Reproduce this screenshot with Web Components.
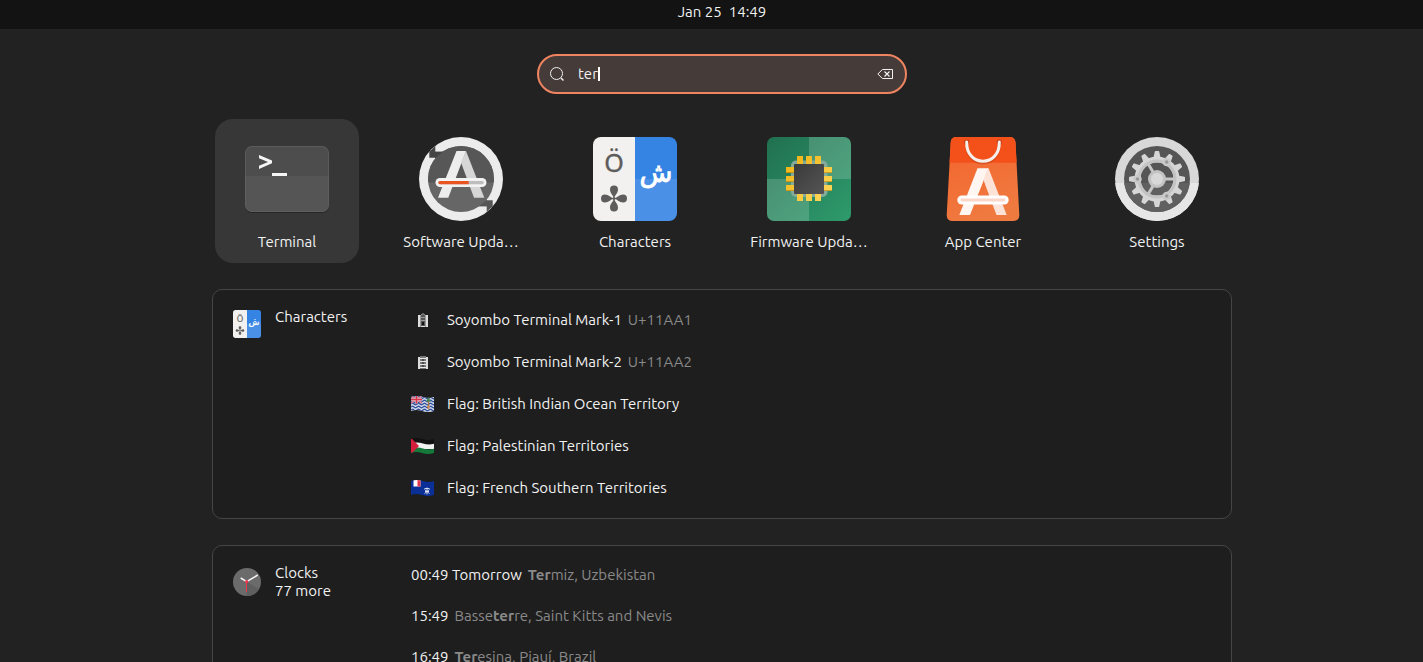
<!DOCTYPE html>
<html lang="en">
<head>
<meta charset="utf-8">
<title>Activities search</title>
<style>
html, body { height: 100%; }
body { margin: 0; overflow: hidden; background: #222; color: #f2f2f2; font: 15px/20px "Ubuntu", "Noto Sans", "Open Sans", sans-serif; }
</style>
</head>
<body>
<activities-overview>
  <top-clock slot="bar" date="Jan 25" time="14:49"></top-clock>
  <search-entry slot="search" value="ter"></search-entry>
  <app-tile slot="apps" icon="terminal" selected>Terminal</app-tile>
  <app-tile slot="apps" icon="updater">Software Upda…</app-tile>
  <app-tile slot="apps" icon="characters">Characters</app-tile>
  <app-tile slot="apps" icon="firmware">Firmware Upda…</app-tile>
  <app-tile slot="apps" icon="center">App Center</app-tile>
  <app-tile slot="apps" icon="settings">Settings</app-tile>
  <result-panel icon="characters" name="Characters">
    <result-row icon="mark1">Soyombo Terminal Mark-1<span slot="detail">U+11AA1</span></result-row>
    <result-row icon="mark2">Soyombo Terminal Mark-2<span slot="detail">U+11AA2</span></result-row>
    <result-row icon="io">Flag: British Indian Ocean Territory</result-row>
    <result-row icon="ps">Flag: Palestinian Territories</result-row>
    <result-row icon="tf">Flag: French Southern Territories</result-row>
  </result-panel>
  <result-panel icon="clocks" name="Clocks" more="77 more">
    <result-row>00:49 Tomorrow<span slot="detail"><b>Ter</b>miz, Uzbekistan</span></result-row>
    <result-row>15:49<span slot="detail">Basse<b>ter</b>re, Saint Kitts and Nevis</span></result-row>
    <result-row>16:49<span slot="detail"><b>Ter</b>esina, Piauí, Brazil</span></result-row>
  </result-panel>
</activities-overview>

<script>
const teeth = Array.from({ length: 12 }, (_, i) =>
  `<path d="M38.400 21L39.800 14.600Q40 14 40.600 14H43.400Q44 14 44.200 14.600L45.600 21Z" transform="rotate(${i * 30} 42 42)"/>`).join('');
const spokes = [0, 120, 240].map(a =>
  `<path d="M50 42H60" transform="rotate(${a} 42 42)"/>`).join('');
const petals = [0, 90, 180, 270].map(a =>
  `<path d="M21 61.500C20 58 17 56 17 52.500a4 4 0 0 1 8 0C25 56 22 58 21 61.500z" transform="rotate(${a} 21 61.500)"/>`).join('');
const flagClip = '<defs><clipPath id="c"><path d="M0 5Q6 3 12 5T23 5V19Q17 21 11 19T0 19z"/></clipPath></defs>';

const ICONS = {
  terminal: ['0 0 84 84', `
    <defs><clipPath id="c"><rect y="9" width="84" height="66" rx="7"/></clipPath></defs>
    <rect y="10" width="84" height="66" rx="7" fill="#262626"/>
    <g clip-path="url(#c)"><path fill="#4d4d4d" d="M0 9h84v30H0z"/><path fill="#555" d="M0 39h84v36H0z"/></g>
    <rect x=".5" y="9.500" width="83" height="65" rx="6.500" fill="none" stroke="#666" stroke-opacity=".6"/>
    <path fill="#f5f5f5" d="M14 18 27 23.500v2.800L14 32v-3.300l9-3.800-9-3.600zM27 36h15v3H27z"/>`],
  updater: ['0 0 84 84', `
    <defs><clipPath id="t"><path d="M0 0h84v45.500H0z"/></clipPath></defs>
    <circle cx="42" cy="42" r="42" fill="#ececec"/>
    <circle cx="42" cy="42" r="33" fill="#666"/>
    <circle cx="42" cy="42" r="33" fill="#575757" clip-path="url(#t)"/>
    <path fill="#575757" d="M16 14.700h8.500L16 22z"/><path fill="#454545" d="M10.300 14.500 16.300 9.200v5.600h7.500l-7.200 6H10.300z"/>
    <g transform="rotate(180 42 42)"><path fill="#666" d="M16 14.700h8.500L16 22z"/><path fill="#555" d="M10.300 14.500 16.300 9.200v5.600h7.500l-7.200 6H10.300z"/></g>
    <path fill="#ededed" d="M37.500 14H47L29.300 60.700H19z"/>
    <path fill="#d6d6d6" d="M42 25.500 47 14l18.300 46.700H55z"/>
    <rect x="16.500" y="41" width="51" height="9" rx="4.500" fill="#f2f2f2"/>
    <rect x="19.300" y="44" width="45.400" height="3.200" rx="1.600" fill="#bdbdbd"/>
    <path fill="#e95420" d="M20.900 44h28.800v3.200H20.900a1.600 1.600 0 0 1 0-3.200z"/>`],
  characters: ['0 0 84 84', `
    <defs><clipPath id="c"><rect width="84" height="84" rx="8"/></clipPath></defs>
    <g clip-path="url(#c)"><path fill="#f2f1ef" d="M0 0h42v84H0z"/><path fill="#3584e4" d="M42 0h42v42H42z"/><path fill="#4a90e6" d="M42 42h42v42H42z"/></g>
    <text x="21" y="35" text-anchor="middle" font-family="Noto Sans, sans-serif" font-size="25" fill="#5e5c5c" stroke="#5e5c5c" stroke-width=".4">Ö</text>
    <g fill="#5e5c5c">${petals}<circle cx="21" cy="61.500" r="1.500"/></g>
    <text x="63" y="45" text-anchor="middle" font-family="DejaVu Sans, sans-serif" font-size="27" fill="#fff" stroke="#fff" stroke-width=".8">ش</text>`],
  firmware: ['0 0 84 84', `
    <defs><clipPath id="c"><rect width="84" height="84" rx="7"/></clipPath>
    <linearGradient id="g" x1="0" y1="0" x2="1" y2="1"><stop stop-color="#217050"/><stop offset="1" stop-color="#2e9b6c"/></linearGradient>
    <linearGradient id="d" x1="0" y1="0" x2="1" y2="1"><stop stop-color="#3a3a3a"/><stop offset="1" stop-color="#555"/></linearGradient>
    <linearGradient id="y" gradientUnits="userSpaceOnUse" x1="20" y1="20" x2="64" y2="64"><stop stop-color="#eeb211"/><stop offset="1" stop-color="#ffda60"/></linearGradient></defs>
    <rect width="84" height="84" rx="7" fill="url(#g)"/>
    <path clip-path="url(#c)" fill="#fff" fill-opacity=".17" d="M42 0h42v42H42zM0 42h42v42H0z"/>
    <rect x="24" y="23.500" width="36.500" height="36.500" rx="5" fill="#84aa9a"/>
    <path fill="url(#y)" d="M30 19h6v8h-6zM39 19h6v8h-6zM48 19h6v8h-6zM30 57h6v7h-6zM39 57h6v7h-6zM48 57h6v7h-6zM19 30h8v6h-8zM19 39h8v6h-8zM19 48h8v6h-8zM57 30h8v6h-8zM57 39h8v6h-8zM57 48h8v6h-8z"/>
    <path fill="#a06c00" fill-opacity=".5" d="M19 35h8v1h-8zM19 44h8v1h-8zM19 53h8v1h-8zM57 35h8v1h-8zM57 44h8v1h-8zM57 53h8v1h-8z"/>
    <rect x="27" y="27" width="30" height="30" rx="1" fill="url(#d)"/>`],
  center: ['0 0 84 84', `
    <defs><clipPath id="c"><path d="M15.500 0h53q5.500 0 6 5.500L78.300 78q0 6-6 6H11.700q-6 0-6-6L9.700 5.500Q10 0 15.500 0z"/></clipPath>
    <linearGradient id="g" x1="0" y1="0" x2=".4" y2="1"><stop stop-color="#f4622c"/><stop offset="1" stop-color="#ef7a40"/></linearGradient></defs>
    <g clip-path="url(#c)"><path fill="url(#g)" d="M0 0h84v84H0z"/><path fill="#f4511a" d="M0 0h84v25.700H0z"/></g>
    <circle cx="25.700" cy="5" r="2.600" fill="#c43d10"/><circle cx="58.300" cy="5" r="2.600" fill="#c43d10"/>
    <path fill="none" stroke="#b93c10" stroke-opacity=".5" stroke-width="3" stroke-linecap="round" d="M25.700 6.500C25 32 59 32 58.300 6.500"/>
    <path fill="none" stroke="#f5efec" stroke-width="3" stroke-linecap="round" d="M25.700 5C25 30.500 59 30.500 58.300 5"/>
    <path fill="#fff6f2" d="M36.500 31.300h11L29 78H18.300z"/>
    <path fill="#fde3d7" d="M42.300 42.500 47.500 31.300 65.700 78H55.500z"/>
    <rect x="16.300" y="58.500" width="51.400" height="9" rx="4.500" fill="#fff"/>
    <rect x="19.500" y="61.600" width="45" height="2.800" rx="1.400" fill="#fcd6c9"/>`],
  settings: ['0 0 84 84', `
    <defs><clipPath id="c"><path d="M0 46h84v38H0z"/></clipPath></defs>
    <circle cx="42" cy="42" r="42" fill="#d8d8d8"/><circle cx="42" cy="42" r="42" fill="#e6e6e6" clip-path="url(#c)"/>
    <circle cx="42" cy="42" r="33" fill="#555"/><circle cx="42" cy="42" r="33" fill="#606060" clip-path="url(#c)"/>
    <g fill="#d6d6d6">${teeth}</g>
    <circle cx="42" cy="42" r="19.500" fill="none" stroke="#d6d6d6" stroke-width="6"/>
    <circle cx="42" cy="42" r="18" fill="none" stroke="#c3c3c3" stroke-width="3"/>
    <g stroke="#c6c6c6" stroke-width="3">${spokes}</g>
    <circle cx="42" cy="42" r="9" fill="#c3c3c3"/><circle cx="42" cy="42" r="6" fill="#d8d8d8"/>
    <g fill="#999" stroke="#c9c9c9" stroke-width="2.500"><circle cx="51.700" cy="25" r="3"/><circle cx="22.500" cy="42" r="3"/><circle cx="51.700" cy="59" r="3"/></g>`],
  clocks: ['0 0 28 28', `
    <circle cx="14" cy="14" r="14" fill="#6b6b6b"/><path fill="#5f5f5f" d="M14 14 26 21A14 14 0 0 1 13.500 28z"/>
    <path stroke="#f4f4f4" stroke-width="1.500" d="M13.700 13.700 24.700 7M13.700 13.700 7.700 10"/>
    <path stroke="#e8364e" d="M13.500 13v11"/><circle cx="13.700" cy="13.700" r="1.600" fill="#ee3550"/>`],
  mark1: ['0 0 24 24', `<path fill="#ddd" d="M7 7h10v12H7z"/><path fill="#555" d="M10 6h4v13h-4z"/><path stroke="#999" fill="none" d="M9.500 19V7.500l2.500-2 2.500 2V19M10 9.500h4M10 12.500h4"/><path fill="#111" d="M11 14h2v3h-2z"/><path stroke="#ddd" d="M10 18.500h4"/>`],
  mark2: ['0 0 24 24', `<path fill="#ddd" d="M7 7h10v12H7z"/><path fill="#777" d="M9 6h6v13H9z"/><path stroke="#e8e8e8" d="M9 8.500h6M9 11.500h6M9 14.500h6M9 17.500h6"/><path stroke="#222" d="M11 10h2M11 13h2M11 16h2"/>`],
  io: ['0 0 24 24', flagClip + `
    <g clip-path="url(#c)"><path fill="#dfe6f4" d="M0 0h24v24H0z"/>
    <path fill="none" stroke="#36539c" stroke-width="1.300" d="M0 6q1.500-1.500 3 0t3 0 3 0 3 0 3 0 3 0 3 0 3 0M0 9q1.500-1.500 3 0t3 0 3 0 3 0 3 0 3 0 3 0 3 0M0 12q1.500-1.500 3 0t3 0 3 0 3 0 3 0 3 0 3 0 3 0M0 15q1.500-1.500 3 0t3 0 3 0 3 0 3 0 3 0 3 0 3 0M0 18q1.500-1.500 3 0t3 0 3 0 3 0 3 0 3 0 3 0 3 0"/>
    <path fill="#3d559d" d="M0 3h11v8.500H0z"/><path stroke="#e8c8d0" stroke-width="1.600" d="m0 4 11 7M11 4 0 11"/><path stroke="#d8354b" stroke-width=".8" d="m0 4 11 7M11 4 0 11"/><path stroke="#f0d0d6" stroke-width="2.400" d="M5.500 3v8.500M0 7.500h11"/><path stroke="#d8354b" stroke-width="1.600" d="M5.500 3v8.500M0 7.500h11"/></g>
    <path stroke="#a8743c" stroke-width="1.200" d="M17.500 9v8"/><path fill="#3f8b4e" d="m15 10 2.500-5 2.500 5-2.500-1z"/><path fill="#d98c47" d="M16 14h3l-1.500 4z"/>`],
  ps: ['0 0 24 24', flagClip + `
    <g clip-path="url(#c)"><path fill="#111" d="M0 3h24v7H0z"/><path fill="#f1f1f1" d="M0 9.500Q6 7.500 12 9.500T24 9.500V15H0z"/><path fill="#14793a" d="M0 14.500Q6 12.500 12 14.500T24 14.500V22H0z"/><path fill="#d31f3b" d="m0 4 8 8-8 8z"/></g>`],
  tf: ['0 0 24 24', flagClip + `
    <g clip-path="url(#c)"><path fill="#0a2f97" d="M0 3h24v18H0z"/><path fill="#fff" d="M2.500 3h7v7.500h-7z"/><path fill="#e23a4c" d="M6.500 3h3v7.500h-3z"/></g>
    <path stroke="#e6eaf6" stroke-width=".9" d="M13.500 12.500h5M14 15.500h4M16 11.500v7M13.500 17.500l5-4M18.500 17.500l-5-4"/>`]
};

function define(name, html, setup) {
  const template = document.createElement('template');
  template.innerHTML = html;
  customElements.define(name, class extends HTMLElement {
    constructor() {
      super();
      this.attachShadow({ mode: 'open' }).append(template.content.cloneNode(true));
    }
    connectedCallback() { if (setup) setup(this, this.shadowRoot); }
  });
}

function createIcon(name) {
  const icon = document.createElement('app-icon');
  icon.setAttribute('name', name);
  return icon;
}

define('app-icon', `
<style>
:host { display: block; flex: none; width: 84px; height: 84px; }
svg { display: block; width: 100%; height: 100%; }
</style><svg aria-hidden="true"></svg>`, (host, root) => {
  const [box, art] = ICONS[host.getAttribute('name')];
  const svg = root.querySelector('svg');
  svg.setAttribute('viewBox', box);
  svg.innerHTML = art;
});

define('top-clock', `
<style>
:host { display: block; background: #131313; padding: 2px 0 7px var(--offset); }
button { display: flex; gap: 7px; margin: 0 auto; padding: 0; border: 0; background: none; color: inherit; font: inherit; }
</style><button type="button"><span class="date"></span><time></time></button>`, (host, root) => {
  root.querySelector('.date').textContent = host.getAttribute('date');
  root.querySelector('time').textContent = host.getAttribute('time');
});

define('search-entry', `
<style>
:host { display: block; width: 370px; max-width: 100%; }
label { display: flex; align-items: center; box-sizing: border-box; height: 40px; padding: 0 12px 0 10px; border: 2px solid #ef8460; border-radius: 20px; background: #453b38; cursor: text; }
svg { display: block; width: 16px; height: 16px; fill: none; stroke: #f2f2f2; }
input { field-sizing: content; min-width: 2px; margin: 0 0 0 13px; padding: 0; border: 0; outline: 0; background: none; color: inherit; font: inherit; caret-color: transparent; }
i { width: 2px; height: 14px; background: #fff; }
button { margin-left: auto; padding: 0; border: 0; background: none; }
</style>
<label>
  <svg viewBox="0 0 16 16" aria-hidden="true"><circle cx="7.500" cy="7.500" r="6"/><path stroke-width="1.500" d="m12 12 2.500 2.500"/></svg>
  <input type="text" aria-label="Type to search"><i></i>
  <button type="button" aria-label="Clear"><svg viewBox="0 0 16 16"><path d="M5.500 3.500h10v9h-10L.8 8z"/><path stroke-width="1.200" d="m7.500 5.500 5 5M12.500 5.500l-5 5"/></svg></button>
</label>`, (host, root) => {
  const input = root.querySelector('input');
  input.value = host.getAttribute('value');
  root.querySelector('button').onclick = () => { input.value = ''; };
});

define('app-tile', `
<style>
:host { display: block; width: 144px; }
button { display: flex; flex-direction: column; align-items: center; gap: 11px; width: 100%; padding: 18px 0 11px; border: 0; border-radius: 18px; background: none; color: inherit; font: inherit; white-space: nowrap; }
:host([selected]) button { background: #373737; }
</style><button type="button"><span><slot></slot></span></button>`, (host, root) => {
  root.querySelector('button').prepend(createIcon(host.getAttribute('icon')));
});

define('result-panel', `
<style>
:host { display: flex; align-items: flex-start; border: 1px solid #454545; border-radius: 10px; background: #1e1e1e; padding: 9px 20px; }
header { display: flex; align-items: center; gap: 14px; width: 178px; flex: none; padding-top: 9px; line-height: 18px; }
app-icon { width: 28px; height: 28px; }
h2 { margin: 0; font: inherit; }
.more { min-height: 14px; }
.rows { flex: 1; min-width: 0; }
</style><header><div><h2></h2><div class="more"></div></div></header><div class="rows"><slot></slot></div>`, (host, root) => {
  root.querySelector('header').prepend(createIcon(host.getAttribute('icon')));
  root.querySelector('h2').textContent = host.getAttribute('name');
  root.querySelector('.more').textContent = host.getAttribute('more') || '';
});

define('result-row', `
<style>
:host { display: flex; align-items: center; box-sizing: border-box; height: 41px; padding-bottom: 1px; }
:host([icon]) { height: 42px; padding-bottom: 0; }
app-icon { width: 24px; height: 24px; margin-right: 12px; }
::slotted([slot="detail"]) { margin-left: 6px; color: #8a8a8a; }
</style><span><slot></slot></span><slot name="detail"></slot>`, (host, root) => {
  const name = host.getAttribute('icon');
  if (name) root.querySelector('span').before(createIcon(name));
});

define('activities-overview', `
<style>
:host { display: block; --offset: 21px; }
main { display: flex; flex-direction: column; align-items: center; padding: 25px 0 25px var(--offset); }
.apps { display: flex; gap: 30px; margin: 25px 0 26px; }
.results { display: flex; flex-direction: column; gap: 26px; width: 1020px; max-width: 100%; }
</style><slot name="bar"></slot><main><slot name="search"></slot><div class="apps"><slot name="apps"></slot></div><div class="results"><slot></slot></div></main>`);
</script>
</body>
</html>
